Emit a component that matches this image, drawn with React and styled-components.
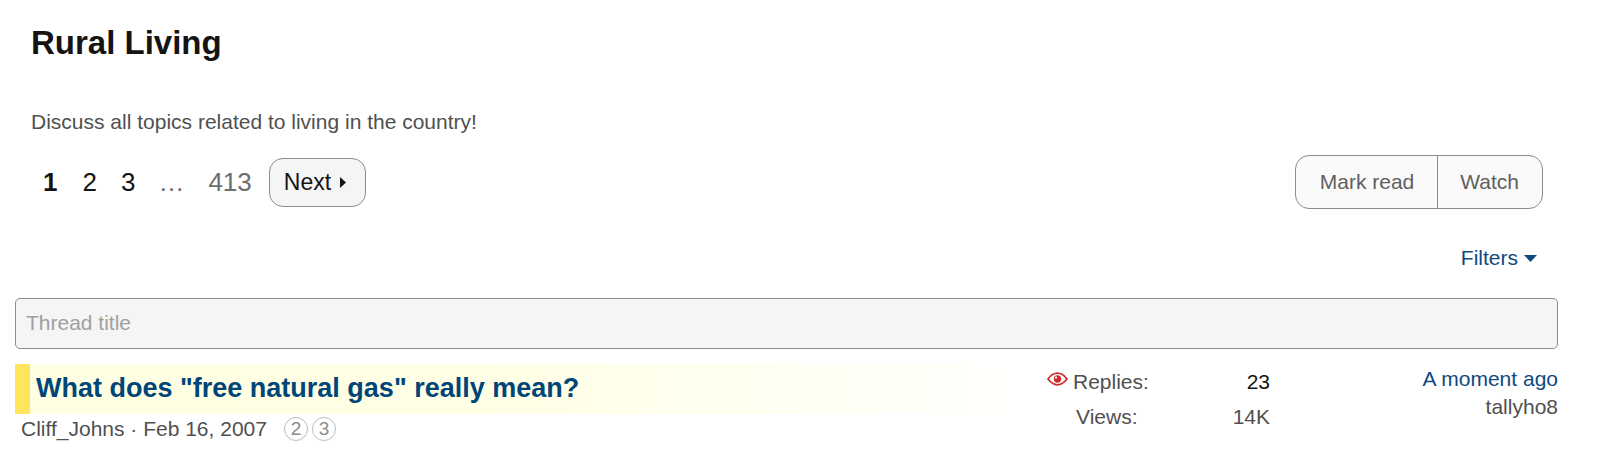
import React from "react";
import styled, { createGlobalStyle } from "styled-components";

const Global = createGlobalStyle`
  html, body { margin: 0; padding: 0; background: #fff; overflow: hidden; }
  body { font-family: "Liberation Sans", Arial, sans-serif; color: #505050; }
`;
const Page = styled.div`
  width: 1620px;
  height: 457px;
  box-sizing: border-box;
  padding: 0 62px 0 15px;
`;
const Header = styled.header`
  padding: 23px 0 0 16px;
`;
const Title = styled.h1`
  margin: 0;
  font-size: 33px;
  line-height: 40px;
  font-weight: 700;
  color: #141414;
`;
const Description = styled.p`
  margin: 47px 0 0;
  font-size: 21px;
  line-height: 24px;
  color: #505050;
`;
const ToolRow = styled.div`
  display: flex;
  justify-content: space-between;
  align-items: center;
  margin-top: 21px;
  padding: 0 15px 0 16px;
`;
const Pager = styled.nav`
  display: flex;
  align-items: center;
  font-size: 26px;
  color: #141414;
`;
const PageNum = styled.span`
  padding: ${(p) => p.$pad || "0 12px"};
  font-weight: ${(p) => (p.$active ? 700 : 400)};
  color: ${(p) => p.$color || "#141414"};
`;
const NextButton = styled.button`
  display: flex;
  align-items: center;
  gap: 9px;
  height: 49px;
  margin-left: 5px;
  padding: 0 19px 0 14px;
  font: inherit;
  font-size: 23px;
  color: #141414;
  background: #f5f5f5;
  border: 1px solid #8c8c8c;
  border-radius: 14px;
`;
const ButtonGroup = styled.div`
  display: flex;
  height: 54px;
  box-sizing: border-box;
  background: #fafafa;
  border: 1px solid #8c8c8c;
  border-radius: 14px;
`;
const GroupButton = styled.button`
  padding: ${(p) => (p.$divided ? "0 23px 0 22px" : "0 23px 0 24px")};
  font: inherit;
  font-size: 21px;
  color: #5f5f5f;
  background: none;
  border: 0;
  border-left: ${(p) => (p.$divided ? "1px solid #8c8c8c" : "0")};
`;
const FilterRow = styled.div`
  display: flex;
  justify-content: flex-end;
  align-items: center;
  gap: 6px;
  margin-top: 37px;
  padding-right: 21px;
  font-size: 21px;
  line-height: 24px;
  color: #0e4a7e;
`;
const TitleInput = styled.div`
  margin-top: 28px;
  height: 51px;
  box-sizing: border-box;
  padding: 0 10px 2px;
  display: flex;
  align-items: center;
  font-size: 21px;
  color: #a0a0a0;
  background: #f5f5f5;
  border: 1px solid #8c8c8c;
  border-radius: 5px;
`;
const ThreadRow = styled.div`
  display: flex;
  margin-top: 15px;
`;
const ThreadMain = styled.div`
  width: 1030px;
`;
const TitleBand = styled.div`
  height: 50px;
  display: flex;
  align-items: center;
  box-sizing: border-box;
  padding: 0 0 2px 6px;
  border-left: 15px solid #ffe55c;
  background: linear-gradient(to right, #ffffe3 0%, #ffffe6 45%, #fffff2 75%, #fff 100%);
`;
const ThreadTitle = styled.a`
  font-size: 27px;
  font-weight: 700;
  color: #004578;
`;
const Meta = styled.div`
  display: flex;
  align-items: center;
  margin-top: 3px;
  padding-left: 6px;
  font-size: 21px;
  line-height: 24px;
  color: #505050;
`;
const PageBubble = styled.span`
  display: inline-flex;
  align-items: center;
  justify-content: center;
  width: 24px;
  height: 24px;
  margin-left: ${(p) => p.$gap || "4px"};
  box-sizing: border-box;
  border: 1px solid #bdbdbd;
  border-radius: 50%;
  font-size: 19px;
  color: #8c8c8c;
`;
const Stats = styled.div`
  display: grid;
  grid-template-columns: 90px 110px;
  grid-auto-rows: 35px;
  width: 200px;
  margin-left: 25px;
  font-size: 21px;
  line-height: 35px;
`;
const StatLabel = styled.span`
  position: relative;
  padding-left: ${(p) => p.$indent || "3px"};
`;
const StatValue = styled.span`
  text-align: right;
  color: ${(p) => p.$color || "#505050"};
`;
const EyeIcon = styled.svg`
  position: absolute;
  left: -23px;
  top: 8px;
`;
const Latest = styled.div`
  flex: 1;
  padding-top: 1px;
  text-align: right;
  font-size: 21px;
  line-height: 28px;
`;
const LatestLink = styled.a`
  display: block;
  color: #0e4a7e;
`;

export default function App() {
  return (
    <Page>
      <Global />
      <Header>
        <Title>Rural Living</Title>
        <Description>Discuss all topics related to living in the country!</Description>
      </Header>
      <ToolRow>
        <Pager>
          <PageNum $active $pad="0 13px 0 12px">1</PageNum>
          <PageNum>2</PageNum>
          <PageNum>3</PageNum>
          <PageNum $color="#6e6e6e" $pad="0 12px 0 11px">…</PageNum>
          <PageNum $color="#6e6e6e">413</PageNum>
          <NextButton>
            Next
            <svg width="6" height="11" viewBox="0 0 6 11"><path d="M0 0l6 5.5-6 5.5z" fill="#141414" /></svg>
          </NextButton>
        </Pager>
        <ButtonGroup>
          <GroupButton>Mark read</GroupButton>
          <GroupButton $divided>Watch</GroupButton>
        </ButtonGroup>
      </ToolRow>
      <FilterRow>
        Filters
        <svg width="13" height="7" viewBox="0 0 13 7"><path d="M0 0h13L6.5 7z" fill="#0e4a7e" /></svg>
      </FilterRow>
      <TitleInput>Thread title</TitleInput>
      <ThreadRow>
        <ThreadMain>
          <TitleBand>
            <ThreadTitle>What does "free natural gas" really mean?</ThreadTitle>
          </TitleBand>
          <Meta>
            Cliff_Johns · Feb 16, 2007
            <PageBubble $gap="17px">2</PageBubble>
            <PageBubble>3</PageBubble>
          </Meta>
        </ThreadMain>
        <Stats>
          <StatLabel>
            <EyeIcon width="21" height="14" viewBox="0 0 21 14">
              <path d="M1 7C4 3 7.300 1.200 10.500 1.200S17 3 20 7c-3 4-6.300 5.800-9.500 5.800S4 11 1 7z" fill="none" stroke="#c9302c" strokeWidth="1.7" />
              <circle cx="10.500" cy="7" r="3.700" fill="#c9302c" />
              <circle cx="9" cy="5.600" r="1.100" fill="#fff" />
            </EyeIcon>
            Replies:
          </StatLabel>
          <StatValue $color="#141414">23</StatValue>
          <StatLabel $indent="6px">Views:</StatLabel>
          <StatValue>14K</StatValue>
        </Stats>
        <Latest>
          <LatestLink>A moment ago</LatestLink>
          tallyho8
        </Latest>
      </ThreadRow>
    </Page>
  );
}
